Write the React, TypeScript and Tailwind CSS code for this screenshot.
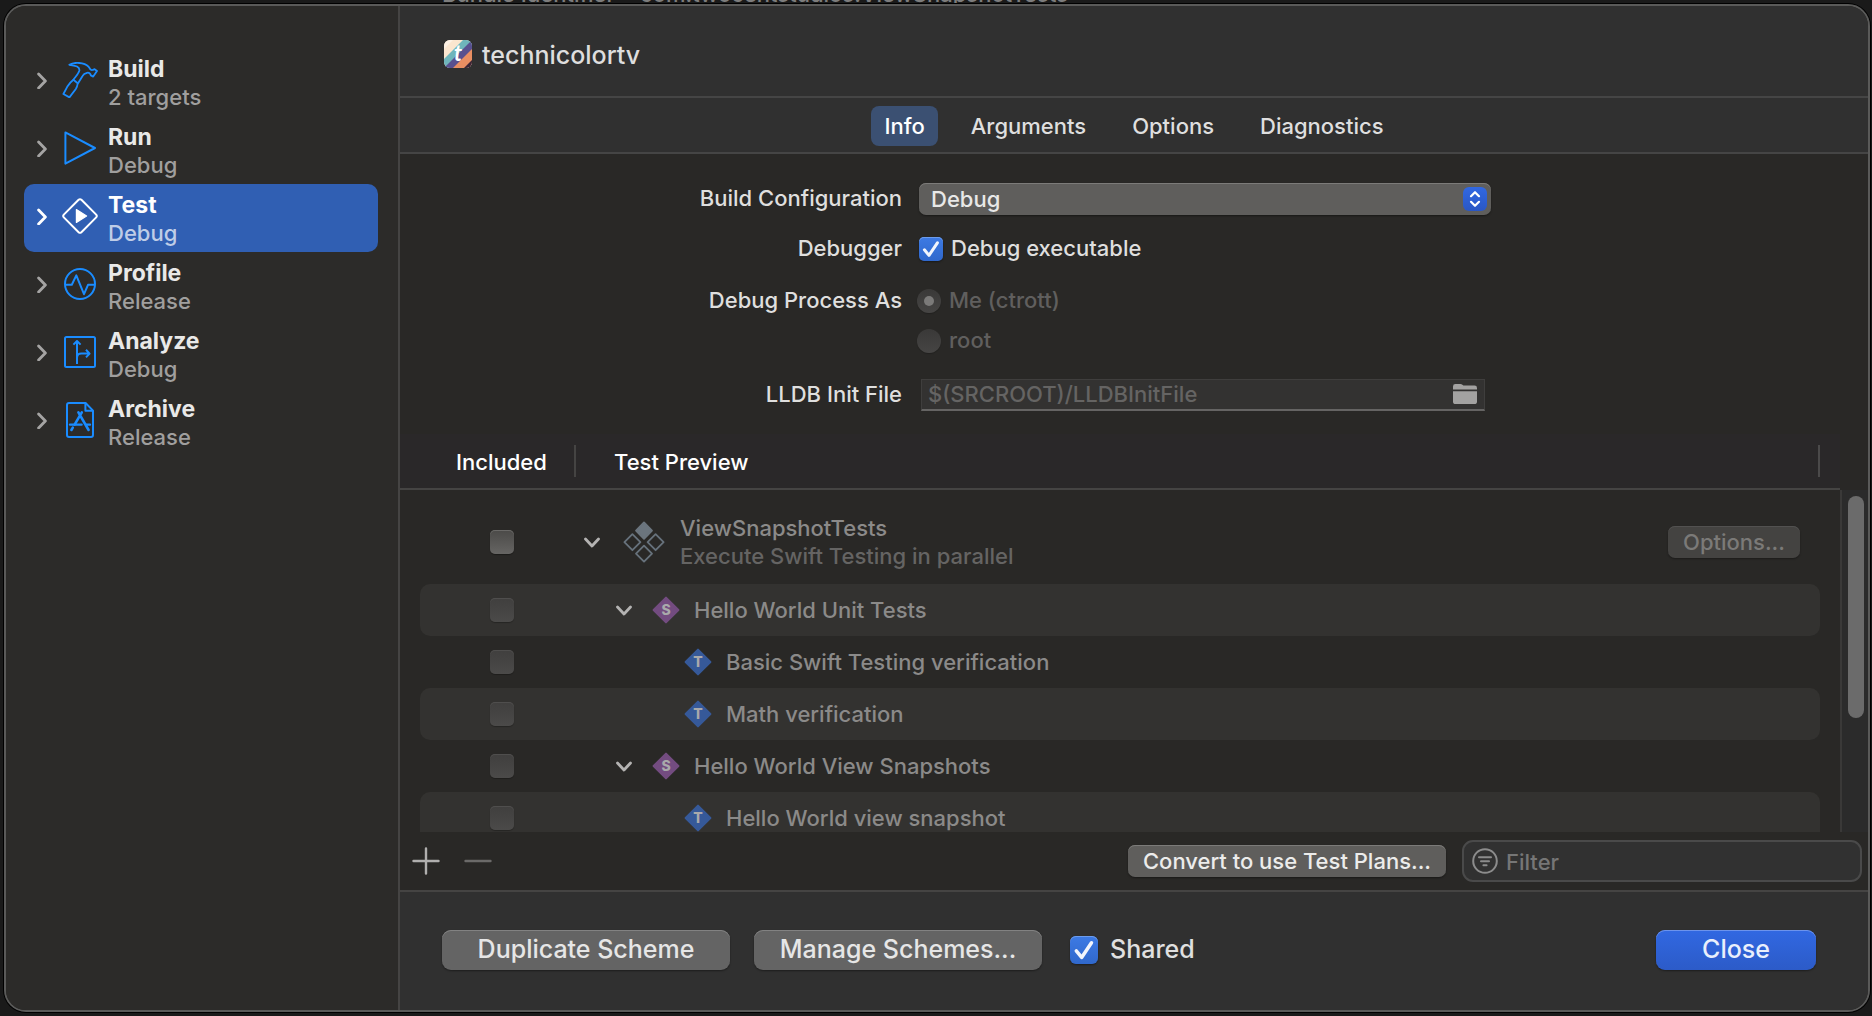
import type { ReactNode } from "react";

const BLUE = "#1a8cff";

function HammerIcon() {
  return (
    <svg width="36" height="36" viewBox="0 0 36 36" fill="none" stroke={BLUE} strokeWidth="1.8" strokeLinejoin="round" strokeLinecap="round">
      <path d="M7.3 2.8C11 .8 15 .2 20 1.4C24 2.3 26.5 4 27.6 6.2C28.2 7.6 29.4 8.6 31 7.8L32.6 7.2L35 9L31.2 14.6L28.8 13.4C28.6 11.4 27 10.4 25 10.8C22.8 11.2 21.4 12.2 20.4 14.2L15.6 22C15.4 24 14.8 25.4 13.8 27L7.4 35.4L1.4 32L5.2 24.8C7 22 9 19.6 11.4 17.8C13.6 14.6 16.6 11.8 17.4 8.4C17.8 5 14 3.4 7.3 2.8Z" />
      <path d="M11.4 17.8L15.4 21" />
    </svg>
  );
}

function RunIcon() {
  return (
    <svg width="36" height="36" viewBox="0 0 36 36" fill="none" stroke={BLUE} strokeWidth="2" strokeLinejoin="round">
      <path d="M3.4 2.4L33 18L3.4 33.6Z" />
    </svg>
  );
}

function TestIcon() {
  return (
    <svg width="36" height="36" viewBox="0 0 36 36" fill="none" stroke="#fff" strokeWidth="2" strokeLinejoin="round">
      <path d="M16.6 1.8Q18 .6 19.4 1.8L34.2 16.6Q35.4 18 34.2 19.4L19.4 34.2Q18 35.4 16.6 34.2L1.8 19.4Q.6 18 1.8 16.6Z" />
      <path d="M14.4 11.6L24.6 18L14.4 24.4Z" fill="#fff" strokeWidth="1.2" />
    </svg>
  );
}

function ProfileIcon() {
  return (
    <svg width="36" height="36" viewBox="0 0 36 36" fill="none" stroke={BLUE} strokeWidth="2" strokeLinejoin="round">
      <circle cx="18" cy="18" r="15" />
      <path d="M3 18.8H9.8L14.3 9.4L22 28.2L26 18.8H33" />
    </svg>
  );
}

function AnalyzeIcon() {
  return (
    <svg width="36" height="36" viewBox="0 0 36 36" fill="none" stroke={BLUE} strokeWidth="2" strokeLinejoin="round">
      <rect x="3" y="3" width="30" height="30" rx="1.5" />
      <path d="M15 30V7M11.4 10.6L15 7L18.6 10.6M15 24Q15 19.6 19.4 19.6H27.4M24 15.8L27.6 19.6L24 23.4" />
    </svg>
  );
}

function ArchiveIcon() {
  return (
    <svg width="36" height="36" viewBox="0 0 36 36" fill="none" stroke={BLUE} strokeWidth="2" strokeLinejoin="round">
      <path d="M7 1H23.6L31 8.6V33Q31 35 29 35H7Q5 35 5 33V3Q5 1 7 1Z" />
      <path d="M23.4 1.4V8.8H31" />
      <path d="M16.4 10.4L26.6 28M19.8 10.4L12.6 22.6M10.8 25.6L9.4 28" strokeWidth="2.6" strokeLinecap="round" />
      <path d="M8 22.6H19.6M24.6 22.6H28" strokeWidth="2.4" strokeLinecap="round" />
    </svg>
  );
}

function AppIcon() {
  return (
    <svg width="28" height="28" viewBox="0 0 28 28" aria-hidden="true">
      <clipPath id="app-shape">
        <rect width="28" height="28" rx="6" />
      </clipPath>
      <g clipPath="url(#app-shape)">
        <rect width="28" height="28" fill="#fbe6cf" />
        <path d="M0 19L19 0H28V28H0Z" fill="#6fb5bb" />
        <path d="M0 28L28 0V28Z" fill="#58508f" />
        <path d="M9 28L28 9V28Z" fill="#e98e62" />
        <path d="M20 28L28 20V28Z" fill="#3a2536" />
        <path d="M0 0H9L0 9Z" fill="#fdf1e4" />
      </g>
      <text x="14" y="21" textAnchor="middle" fontFamily="Lato, sans-serif" fontStyle="italic" fontWeight="700" fontSize="22" fill="#fff">
        t
      </text>
    </svg>
  );
}

function ChevronRight({ color }: { color: string }) {
  return (
    <svg width="10" height="18" viewBox="0 0 10 18" fill="none" stroke={color} strokeWidth="2.8" strokeLinecap="round" strokeLinejoin="round">
      <path d="M1.6 3L8.4 10L1.6 17" />
    </svg>
  );
}

function ChevronDown() {
  return (
    <button type="button" aria-label="Collapse" className="flex w-4 shrink-0 justify-center">
      <svg width="16" height="12" viewBox="0 0 16 12" fill="none" stroke="#b4b3b2" strokeWidth="2.8" strokeLinecap="round" strokeLinejoin="round">
        <path d="M1.5 3L8 10L14.5 3" />
      </svg>
    </button>
  );
}

function TargetIcon() {
  return (
    <svg width="42" height="42" viewBox="0 0 42 42" fill="none" stroke="#67727c" strokeWidth="1.8" strokeLinejoin="round" className="shrink-0">
      <path d="M21 1.4L29 9.6L21 17.8L13 9.6Z" fill="#6b757e" stroke="#6b757e" />
      <path d="M9.4 13.2L17.4 21.2L9.4 29.2L1.4 21.2Z" />
      <path d="M32.6 13.2L40.6 21.2L32.6 29.2L24.6 21.2Z" />
      <path d="M21 24.6L29 32.6L21 40.6L13 32.6Z" />
    </svg>
  );
}

function Badge({ letter }: { letter: "S" | "T" }) {
  const fill = letter === "S" ? "#734c80" : "#365999";
  return (
    <svg width="28" height="28" viewBox="0 0 28 28" className="shrink-0" aria-hidden="true">
      <path d="M14 1.6L26.4 14L14 26.4L1.6 14Z" fill={fill} stroke={fill} strokeWidth="2" strokeLinejoin="round" />
      <text x="14" y="19" textAnchor="middle" fontFamily="Inter, sans-serif" fontWeight="800" fontSize="14" fill="#a9a9ab">
        {letter}
      </text>
    </svg>
  );
}

type Scheme = { name: string; detail: string; icon: ReactNode; selected?: boolean };

const schemes: Scheme[] = [
  { name: "Build", detail: "2 targets", icon: <HammerIcon /> },
  { name: "Run", detail: "Debug", icon: <RunIcon /> },
  { name: "Test", detail: "Debug", icon: <TestIcon />, selected: true },
  { name: "Profile", detail: "Release", icon: <ProfileIcon /> },
  { name: "Analyze", detail: "Debug", icon: <AnalyzeIcon /> },
  { name: "Archive", detail: "Release", icon: <ArchiveIcon /> },
];

function Sidebar() {
  return (
    <nav aria-label="Scheme actions" className="flex w-[394px] shrink-0 flex-col border-r-2 border-[#454443] bg-[#2c2b29] pt-[42px] pr-5 pl-[18px]">
      {schemes.map((s) => (
        <button
          key={s.name}
          type="button"
          aria-current={s.selected}
          className={`flex h-[68px] items-center rounded-[10px] pb-1 pl-[13px] text-left ${s.selected ? "bg-[#305fb3]" : ""}`}
        >
          <ChevronRight color={s.selected ? "#fff" : "#a5a4a3"} />
          <span className="mr-2.5 ml-[15px]">{s.icon}</span>
          <span className="flex flex-col pt-1.5 leading-7">
            <span className={`text-[23px] font-bold ${s.selected ? "text-white" : "text-[#e9e9e8]"}`}>{s.name}</span>
            <span className={s.selected ? "text-[#bfcde7]" : "text-[#a09f9e]"}>{s.detail}</span>
          </span>
        </button>
      ))}
    </nav>
  );
}

function Tick({ id, size }: { id: string; size: "sm" | "lg" }) {
  return (
    <span className="grid place-items-center">
      <input
        id={id}
        type="checkbox"
        defaultChecked
        className={`col-start-1 row-start-1 appearance-none bg-linear-to-b from-[#3d7ae4] to-[#3068cc] shadow-[inset_0_1px_0_#6c9cec,0_1px_2px_#00000066] ${size === "lg" ? "size-7 rounded-[6px]" : "size-6 rounded-[5px]"}`}
      />
      <svg viewBox="0 0 24 24" fill="none" stroke="#f2f5fc" strokeWidth="3" strokeLinecap="round" strokeLinejoin="round" className={`pointer-events-none col-start-1 row-start-1 ${size === "lg" ? "size-7" : "size-6"}`}>
        <path d="M5.4 12.8L10 18.4L18.4 5.8" />
      </svg>
    </span>
  );
}

function RadioOption({ label, checked }: { label: string; checked?: boolean }) {
  return (
    <label className="-ml-0.5 flex items-center gap-2 text-[#605f5e]">
      <span className="grid place-items-center">
        <input
          type="radio"
          name="process"
          disabled
          defaultChecked={checked}
          className="peer col-start-1 row-start-1 size-6 appearance-none rounded-full bg-linear-to-b from-[#3a3938] to-[#464544] shadow-[0_1px_1px_#00000033]"
        />
        <span className="pointer-events-none col-start-1 row-start-1 size-[10px] rounded-full peer-checked:bg-[#7b7a79]" />
      </span>
      {label}
    </label>
  );
}

function FormRow({ label, htmlFor, className, children }: { label?: string; htmlFor?: string; className: string; children: ReactNode }) {
  return (
    <div className={`grid h-8 grid-cols-[502fr_949fr] items-center gap-x-[17px] ${className}`}>
      <label htmlFor={htmlFor} className="text-right text-[#dfdfde]">
        {label}
      </label>
      <div>{children}</div>
    </div>
  );
}

function InfoForm() {
  return (
    <form className="flex shrink-0 flex-col pt-7 pb-6">
      <FormRow label="Build Configuration" htmlFor="config" className="">
        <div className="relative h-8 max-w-[572px]">
          <select id="config" className="size-full appearance-none rounded-[7px] bg-[#5f5e5c] pb-0.5 pl-3 text-[#e8e8e7] shadow-[inset_0_1px_0_#7c7b79,0_1px_2px_#00000066]">
            <option>Debug</option>
            <option>Release</option>
          </select>
          <span className="pointer-events-none absolute top-1 right-1 grid size-6 place-items-center rounded-[6px] bg-linear-to-b from-[#3168e2] to-[#2a57c4]">
            <svg width="24" height="24" viewBox="0 0 24 24" fill="none" stroke="#fff" strokeWidth="2.2" strokeLinecap="round" strokeLinejoin="round">
              <path d="M8 9.2L12 5.2L16 9.2M8 14.8L12 18.8L16 14.8" />
            </svg>
          </span>
        </div>
      </FormRow>
      <FormRow label="Debugger" htmlFor="debug-exec" className="mt-[18px]">
        <div className="flex items-center gap-2 text-[#dfdfde]">
          <Tick id="debug-exec" size="sm" />
          <label htmlFor="debug-exec">Debug executable</label>
        </div>
      </FormRow>
      <FormRow label="Debug Process As" className="mt-5">
        <RadioOption label="Me (ctrott)" checked />
      </FormRow>
      <FormRow className="mt-2">
        <RadioOption label="root" />
      </FormRow>
      <FormRow label="LLDB Init File" htmlFor="lldb" className="mt-[22px]">
        <div className="ml-0.5 flex h-8 max-w-[564px] items-center border border-b-2 border-[#3f3e3d] border-b-[#656463] bg-[#333231] pr-[7px] pl-1.5">
          <input id="lldb" type="text" placeholder="$(SRCROOT)/LLDBInitFile" className="min-w-0 flex-1 bg-transparent leading-7 outline-none placeholder:text-[#656463]" />
          <button type="button" aria-label="Choose file">
            <svg width="24" height="20" viewBox="0 0 24 20" fill="#a3a2a1">
              <path d="M0 5.4V2.4Q0 0 2.4 0H7.4Q8.6 0 9.4 .8L10.4 1.6H21.6Q24 1.6 24 4V5.4Z" />
              <path d="M0 7.2H24V17.4Q24 20 21.4 20H2.6Q0 20 0 17.4Z" />
            </svg>
          </button>
        </div>
      </FormRow>
    </form>
  );
}

type TestRow = { name: string; kind: "S" | "T"; striped?: boolean };

const tests: TestRow[] = [
  { name: "Hello World Unit Tests", kind: "S", striped: true },
  { name: "Basic Swift Testing verification", kind: "T" },
  { name: "Math verification", kind: "T", striped: true },
  { name: "Hello World View Snapshots", kind: "S" },
  { name: "Hello World view snapshot", kind: "T", striped: true },
];

function TestTable() {
  return (
    <section className="flex min-h-0 flex-1">
      <div className="min-w-0 flex-1 overflow-hidden">
        <table className="w-full border-separate border-spacing-0">
          <thead>
            <tr className="h-14 bg-[#2a2829] text-left text-white">
              <th scope="col" className="w-44 border-b-2 border-[#454443] p-0 font-medium">
                <div className="flex h-8 items-center border-r-2 border-[#454443] pt-0.5 pl-14">Included</div>
              </th>
              <th scope="col" className="border-b-2 border-[#454443] p-0 font-medium">
                <div className="mr-5 flex h-8 items-center border-r-2 border-[#4b4a4a] pt-0.5 pl-[38px]">Test Preview</div>
              </th>
            </tr>
          </thead>
          <tbody>
            <tr>
              <td className="p-0 pt-2.5">
                <div className="flex h-[84px] items-center pl-[90px]">
                  <input type="checkbox" aria-label="Include ViewSnapshotTests" className="size-6 appearance-none rounded-[5px] bg-linear-to-b from-[#4b4a48] to-[#666563] shadow-[inset_0_1px_0_#6a6967,0_1px_1px_#00000055]" />
                </div>
              </td>
              <td className="p-0 pt-2.5">
                <div className="mr-5 flex h-[84px] items-center pr-5 pl-2">
                  <ChevronDown />
                  <span className="mr-[15px] ml-[23px]">
                    <TargetIcon />
                  </span>
                  <div className="flex flex-col leading-7">
                    <span className="text-[#8b8a89]">ViewSnapshotTests</span>
                    <span className="text-[#656463]">Execute Swift Testing in parallel</span>
                  </div>
                  <button type="button" disabled className="ml-auto h-8 w-[132px] rounded-[7px] bg-[#444341] text-[#7b7a78] shadow-[inset_0_1px_0_#525150,0_1px_2px_#00000055]">
                    Options...
                  </button>
                </div>
              </td>
            </tr>
            {tests.map((t) => (
              <tr key={t.name}>
                <td className="p-0">
                  <div className={`ml-5 flex h-[52px] items-center rounded-l-[10px] pl-[70px] ${t.striped ? "bg-[#333230]" : ""}`}>
                    <input type="checkbox" disabled aria-label={`Include ${t.name}`} className="size-6 appearance-none rounded-[5px] bg-linear-to-b from-[#403f3e] to-[#4b4a49] shadow-[inset_0_1px_0_#4f4e4d,0_1px_1px_#00000044]" />
                  </div>
                </td>
                <td className="p-0">
                  <div className={`mr-5 flex h-[52px] items-center rounded-r-[10px] text-[#8b8a89] ${t.striped ? "bg-[#333230]" : ""} ${t.kind === "S" ? "pl-10" : "pl-[108px]"}`}>
                    {t.kind === "S" && (
                      <span className="mr-5">
                        <ChevronDown />
                      </span>
                    )}
                    <Badge letter={t.kind} />
                    <span className="ml-3.5">{t.name}</span>
                  </div>
                </td>
              </tr>
            ))}
          </tbody>
        </table>
      </div>
      <div className="flex w-7 shrink-0 flex-col pt-14">
        <div className="flex-1 border-l-2 border-[#3a3938] bg-[#2b2b2b] pt-1.5 pl-1.5">
          <div className="h-[222px] w-4 rounded-full bg-[#6b6b6b]" />
        </div>
      </div>
    </section>
  );
}

function TableToolbar() {
  return (
    <div className="flex h-15 shrink-0 items-center border-b-2 border-[#454443] pr-1.5 pl-3">
      <button type="button" aria-label="Add">
        <svg width="28" height="28" viewBox="0 0 28 28" stroke="#b0afae" strokeWidth="2.4" strokeLinecap="round">
          <path d="M14 1.5V26.5M1.5 14H26.5" />
        </svg>
      </button>
      <button type="button" aria-label="Remove" disabled className="ml-6">
        <svg width="28" height="28" viewBox="0 0 28 28" stroke="#6b6a69" strokeWidth="2.4" strokeLinecap="round">
          <path d="M1.5 14H26.5" />
        </svg>
      </button>
      <button type="button" className="ml-auto h-8 w-[318px] rounded-[7px] bg-[#5f5e5c] text-[#ececeb] shadow-[inset_0_1px_0_#7c7b79,0_1px_2px_#00000066]">
        Convert to use Test Plans...
      </button>
      <div className="ml-4 flex h-[42px] w-[400px] items-center gap-2 rounded-[11px] border-2 border-[#4a4a4a] bg-[#313131] px-2">
        <svg width="26" height="26" viewBox="0 0 26 26" fill="none" stroke="#8c8c8c" strokeWidth="2" strokeLinecap="round" className="shrink-0">
          <circle cx="13" cy="13" r="11.8" />
          <path d="M7 9.2H19M9 13.2H17M11.4 17.2H14.6" />
        </svg>
        <input type="text" aria-label="Filter" placeholder="Filter" className="min-w-0 flex-1 bg-transparent pt-0.5 outline-none placeholder:text-[#767676]" />
      </div>
    </div>
  );
}

const tabs = ["Info", "Arguments", "Options", "Diagnostics"];

const bigButton = "h-10 w-72 rounded-[9px] bg-[#646464] text-[25px] text-[#e6e6e6] shadow-[inset_0_1px_0_#828282,0_1px_2px_#00000066]";

export default function App() {
  return (
    <div className="flex h-screen flex-col overflow-hidden bg-[#1a1a1a] pr-0.5 pl-1 font-[Inter,sans-serif] text-[22px] font-[450]">
      <div className="flex h-1 shrink-0 items-end overflow-hidden pl-[438px] leading-5 whitespace-nowrap text-[#7d7d7d]">
        <span className="w-[198px] shrink-0">Bundle Identifier</span>
        <span>com.twocentstudios.ViewSnapshotTests</span>
      </div>
      <main className="flex min-h-0 flex-1 overflow-hidden rounded-[22px] border-2 border-[#5a5a59] bg-[#292826] shadow-[0_0_0_1px_#000]">
        <Sidebar />
        <div className="flex min-w-0 flex-1 flex-col">
          <header className="flex h-[92px] shrink-0 items-center gap-2.5 border-b-2 border-[#454545] bg-[#303030] pt-1.5 pl-11">
            <AppIcon />
            <h1 className="pt-1 text-[25px] text-[#dedede]">technicolortv</h1>
          </header>
          <div className="flex h-14 shrink-0 items-center justify-center gap-5 border-b-2 border-[#454545] bg-[#303030] pt-0.5">
            {tabs.map((t) => (
              <button
                key={t}
                type="button"
                className={`h-10 rounded-[8px] px-[13px] ${t === "Info" ? "bg-[#3b5072] text-white" : "text-[#dfdfdf]"}`}
              >
                {t}
              </button>
            ))}
          </div>
          <InfoForm />
          <TestTable />
          <TableToolbar />
          <footer className="flex h-[118px] shrink-0 items-center bg-[#303030] pr-[52px] pb-0.5 pl-[42px]">
            <button type="button" className={bigButton}>
              Duplicate Scheme
            </button>
            <button type="button" className={`ml-6 ${bigButton}`}>
              Manage Schemes...
            </button>
            <div className="ml-7 flex items-center gap-3 text-[25px] text-[#e0e0e0]">
              <Tick id="shared" size="lg" />
              <label htmlFor="shared">Shared</label>
            </div>
            <button type="button" className="ml-auto h-10 w-40 rounded-[9px] bg-linear-to-b from-[#3168e2] to-[#2c5bc8] text-[25px] text-[#e9effc] shadow-[inset_0_1px_0_#6c93ec,0_1px_2px_#00000066]">
              Close
            </button>
          </footer>
        </div>
      </main>
      <div className="h-1 shrink-0" />
    </div>
  );
}
